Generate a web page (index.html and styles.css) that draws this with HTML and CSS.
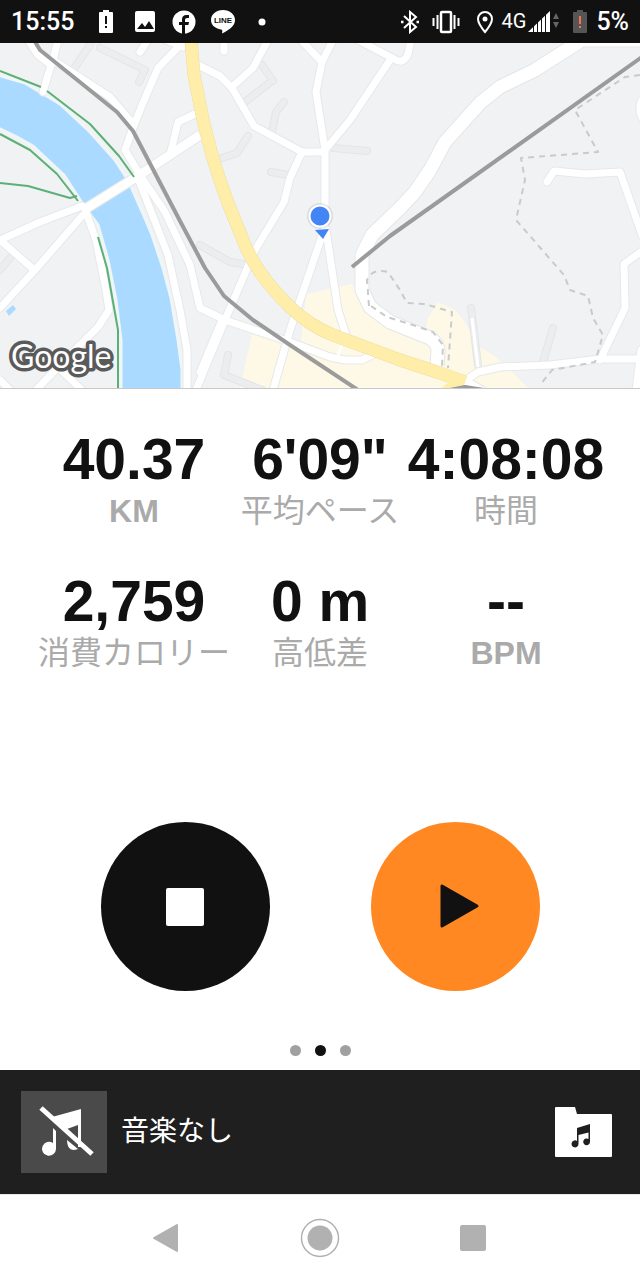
FILE: index.html
```html
<!DOCTYPE html>
<html lang="ja">
<head>
<meta charset="utf-8">
<meta name="viewport" content="width=device-width, initial-scale=1">
<title>ランニング</title>
<link rel="stylesheet" href="styles.css">
</head>
<body>
<header class="status">
  <div class="status-left">
    <time class="clock">15:55</time>
    <svg class="ic" viewBox="0 0 24 24" fill="#fff"><path d="M9 0h6v2h3q1 0 1 1v19q0 1-1 1H6q-1 0-1-1V3q0-1 1-1h3z"/><path d="M11 6h2v8h-2zM11 16h2v2h-2z" fill="#111"/></svg>
    <svg class="ic" viewBox="0 0 24 24" fill="#fff"><rect x="2" y="1" width="20" height="21" rx="2"/><path d="M4 19l5-6 3 4 4-6 5 8z" fill="#111"/></svg>
    <svg class="ic" viewBox="0 0 24 24"><circle cx="12" cy="12" r="11.500" fill="#fff"/><path d="M10 24v-9H7v-3h3V9.500q0-4.500 4.500-4.500h2.500v3h-2q-2 0-2 2v2h4l-.6 3H13v9z" fill="#111"/></svg>
    <svg class="ic" viewBox="0 0 24 24"><path d="M12 0C5 0 0 4.500 0 10c0 5 4 8.500 10 9.500 1.500.3 1.500 1 1 4C18 20 24 16 24 10 24 4.500 19 0 12 0z" fill="#fff"/><text class="line-mark" x="12" y="13" text-anchor="middle">LINE</text></svg>
    <svg class="ic" viewBox="0 0 24 24"><circle cx="12" cy="12" r="3.500" fill="#fff"/></svg>
  </div>
  <div class="status-right">
    <svg class="ic" viewBox="0 0 24 24" fill="none" stroke="#fff" stroke-width="2"><path d="M6 6l12 11-6 5V2l6 5L6 18"/><path d="M3 12h2.500M18.500 12H21" stroke-width="2.500"/></svg>
    <svg class="ic-wide" viewBox="0 0 32 24" fill="none" stroke="#fff" stroke-width="2.500"><rect x="11" y="2" width="10" height="20" rx="1"/><path d="M7.500 5v14M24.500 5v14M3.500 8v8M28.500 8v8" stroke-width="2"/></svg>
    <div class="network">
      <svg class="ic-pin" viewBox="0 0 30 24" fill="none" stroke="#fff" stroke-width="2"><path d="M15 22C10 16 8 12 8 9a7 7 0 0 1 14 0c0 3-2 7-7 13z"/><circle cx="15" cy="9" r="2.500" fill="#fff" stroke="none"/></svg>
      <span class="gen">4G</span>
      <svg class="ic-wide" viewBox="0 0 32 24"><path d="M0 22L22 1v21z" fill="#fff"/><path d="M5.500 14v9M9.500 9v14M13.500 6v17M17.500 2v21" stroke="#111"/><path d="M25 9l3-6 3 6zM25 12l3 6 3-6z" fill="#666"/></svg>
    </div>
    <div class="power">
      <svg class="ic" viewBox="0 0 24 24"><path d="M9 0h6v2h3q1 0 1 1v19q0 1-1 1H6q-1 0-1-1V3q0-1 1-1h3z" fill="#555"/><path d="M11 6h2v8h-2zM11 16h2v2h-2z" fill="#f4744e"/></svg>
      <span class="clock">5%</span>
    </div>
  </div>
</header>

<svg class="map" viewBox="0 43 640 345" preserveAspectRatio="xMidYMid slice" role="img" aria-label="地図">
  <defs>
    <g id="lanes">
      <path d="M100 48L145 70 139 82M90 45L75 67M245 102L268 84M262 65L273 81M284 102L276 112 272 132M248 136L237 153 222 158M271 172L288 175M333 148L367 151M200 245L230 262 243 264M228 355L224 375 262 390M471 308L478 365M553 328L543 362M0 270L10 258"/>
    </g>
    <g id="streets">
      <path d="M0 240L40 222 82 206M0 308L35 270 82 216M0 240L32 268M86 212L96 240 106 290 109 310 98 327 70 355 36 390M0 380L10 390M62 371L82 390"/>
      <path d="M28 40L38 55 51 65 43 92M58 40L53 60 110 97 134 125 125 150 142 178 165 212 190 265 200 308 225 320 290 342 330 357 345 360 362 360 374 354"/>
      <path d="M138 178L152 214 168 255 180 310 187 350 187 390M183 42L158 68 145 98 134 125M166 40L183 47M148 40L140 52M195 114L178 122 171 151M224 40V51"/>
      <path d="M198 65L220 76 232 88 254 126 302 152H325M268 40L253 68 233 86M301 40L322 62 333 40M322 62L316 92 325 150V225M358 40L396 60Q404 64 408 54L411 40M390 60L350 120 325 150"/>
      <path d="M302 152L290 178 284 202 255 250 225 320 196 390M324 230L290 330 273 390M326 230L338 310 347 338M222 320L200 372"/>
      <path d="M547 182L554 171 585 174 620 172 642 235M642 251L624 264 625 308 600 360M460 384L478 372 500 367 550 365 600 359H642M641 350L636 390M466 381L482 390M646 94Q634 108 646 124"/>
    </g>
    <path id="bridge" d="M82 211L138 176 200 135"/>
    <path id="avenue" d="M642 40H582L535 70 500 87 480 103 445 142 430 170 415 192 400 208 372 235 362 255V290L370 307 390 322 430 338Q438 344 438 350L437 366"/>
    <path id="highway" d="M191 40L194 75 203 120 212 155Q219 179 228 203L245 245Q258 276 290 307 310 326 333 335L400 360 440 373 465 382"/>
  </defs>
  <rect x="0" y="42" width="640" height="348" fill="#f0f2f4"/>
  <path class="town" d="M306 294L352 284 372 312 425 336 427 320 438 302 455 310Q467 322 478 347 495 352 528 388H240L252 334 300 348z"/>
  <path class="river" d="M-6 74L25 83 60 104 90 132 115 160 128 180 144 216 152 235 163 268 171 298 178 340 182 370V392H121V340L116 300 108 260 98 225 84 206 64 175 50 162 33 146 15 136-6 126z"/>
  <path fill="#aadaff" d="M6 311L13 305 16 309 9 316z"/>
  <use href="#lanes" class="lane-edge"/><use href="#lanes" class="lane"/>
  <use href="#streets" class="street-edge"/><use href="#bridge" class="bridge-edge"/><use href="#avenue" class="avenue-edge"/>
  <use href="#streets" class="street"/><use href="#bridge" class="bridge"/><use href="#avenue" class="avenue"/>
  <path class="lane-white" d="M344 340L338 355M472 318L478 367"/>
  <path class="park" d="M0 71L41 87M47 91L90 124 119 156 134 177M0 134L30 150 57 174 78 201M0 183L28 186 70 198 77 196M98 237L107 268 118 330V388"/>
  <path class="trail" d="M369 306L367 280Q372 268 388 272L400 290 407 303 425 304 452 312 448 368M371 306L387 317 413 325 433 332 443 345 442 366M640 75L625 77 575 110 598 152 521 158 525 180 516 220 564 275 570 290 588 296 593 318 603 335 595 362 552 370 540 385"/>
  <use href="#highway" class="highway-edge"/><use href="#highway" class="highway"/>
  <path class="highway" d="M460 381L446 392"/>
  <path class="rail" d="M34 40L40 50 117 112 133 131 180 221 205 268 224 296 253 320 290 345 358 390M352 267L390 236 642 57M450 390L465 387 484 390"/>
  <circle cx="320" cy="216" r="13" fill="#99a" opacity=".25"/>
  <path d="M315 230l14-1-6 10z" fill="#4285f4"/>
  <circle cx="320" cy="216" r="10.500" fill="#4285f4" stroke="#fff" stroke-width="2"/>
  <text class="credit" x="11" y="368">Google</text>
</svg>

<main class="run">
  <section class="stats">
    <div class="stat"><span class="value">40.37</span><span class="label">KM</span></div>
    <div class="stat"><span class="value">6'09"</span><span class="label">平均ペース</span></div>
    <div class="stat"><span class="value">4:08:08</span><span class="label">時間</span></div>
    <div class="stat"><span class="value">2,759</span><span class="label">消費カロリー</span></div>
    <div class="stat"><span class="value">0 m</span><span class="label">高低差</span></div>
    <div class="stat"><span class="value">--</span><span class="label">BPM</span></div>
  </section>
  <div class="controls">
    <button class="round stop" aria-label="停止"><svg viewBox="0 0 60 60"><rect x="11" y="11" width="38" height="38" rx="2" fill="#fff"/></svg></button>
    <button class="round play" aria-label="再開"><svg viewBox="0 0 60 60"><path d="M17 9v40l35-20z" fill="#111" stroke="#111" stroke-width="3" stroke-linejoin="round"/></svg></button>
  </div>
  <div class="pager"><span class="dot"></span><span class="dot current"></span><span class="dot"></span></div>
</main>

<section class="music">
  <div class="art"><svg viewBox="0 0 86 82"><path d="M31 26L60 18V56H57V34L46 38z" fill="#fff"/><path d="M32 37L35 40V58A7 7 0 1 1 32 52z" fill="#fff"/><path d="M46 49L57 58Q46 62 46 49z" fill="#fff"/><path d="M20 17L71 63" stroke="#fff" stroke-width="5"/></svg></div>
  <span class="track">音楽なし</span>
  <button class="library" aria-label="音楽ライブラリ"><svg viewBox="0 0 57 50"><path d="M0 1q0-1 1-1h19l2 7h34q1 0 1 1v41q0 1-1 1H1q-1 0-1-1z" fill="#fff"/><path d="M22 21l13-4v18a3.400 3.400 0 1 1-1.500-3v-6.500L23.500 28v9a3.500 3.500 0 1 1-1.500-3z" fill="#1f1f1f"/></svg></button>
</section>

<nav class="system">
  <button aria-label="戻る"><svg viewBox="0 0 40 40"><path d="M7 20L30 7v26z" fill="#b1b1b1" stroke="#b1b1b1" stroke-width="2" stroke-linejoin="round"/></svg></button>
  <button aria-label="ホーム"><svg viewBox="0 0 40 40"><circle cx="20" cy="20" r="18.500" fill="none" stroke="#b1b1b1" stroke-width="1.500"/><circle cx="20" cy="20" r="12.500" fill="#b1b1b1"/></svg></button>
  <button aria-label="履歴"><svg viewBox="0 0 40 40"><rect x="7" y="7" width="26" height="26" rx="2" fill="#b1b1b1"/></svg></button>
</nav>
</body>
</html>
```
FILE: styles.css
```css
* { box-sizing: border-box; }
body {
  margin: 0;
  min-height: 100vh;
  display: flex;
  flex-direction: column;
  background: #fff;
  color: #111;
  font-family: "Liberation Sans", "Noto Sans CJK JP", sans-serif;
}
svg { display: block; flex: none; }
button { border: 0; padding: 0; background: none; cursor: pointer; }

.status {
  height: 43px;
  padding: 0 11px;
  display: flex;
  align-items: center;
  justify-content: space-between;
  background: #111;
  color: #fff;
  font-family: Roboto, sans-serif;
}
.status-left, .status-right, .network, .power { display: flex; align-items: center; }
.status-left { gap: 15px; }
.status-right { gap: 8px; }
.network { gap: 2px; }
.power { gap: 4px; }
.clock { font-size: 25px; line-height: 43px; font-weight: 500; }
.status-left .clock { margin-right: 5px; }
.gen { font-size: 20px; line-height: 43px; }
.ic { width: 24px; height: 24px; }
.ic-wide { width: 32px; height: 24px; }
.ic-pin { width: 30px; height: 24px; }
.line-mark { font: bold 8px "Liberation Sans", sans-serif; fill: #111; }

.map { width: 100%; height: 346px; border-bottom: 1px solid #c8c8c8; }
.map use, .map path { stroke-linejoin: round; }
.town { fill: #fef8e6; }
.river { fill: #aadaff; stroke: #f0f5f5; stroke-width: 3; }
.lane-edge, .lane, .street-edge, .street, .bridge-edge, .bridge, .avenue-edge, .avenue,
.lane-white, .park, .trail, .highway-edge, .highway, .rail { fill: none; }
.lane-edge { stroke: #e4e5e7; stroke-width: 8; stroke-linecap: round; }
.lane { stroke: #ecedef; stroke-width: 6; stroke-linecap: round; }
.lane-white { stroke: #fff; stroke-width: 3; }
.street-edge { stroke: #e6e8ea; stroke-width: 9; stroke-linecap: round; }
.street { stroke: #fff; stroke-width: 7; stroke-linecap: round; }
.bridge-edge { stroke: #e6e8ea; stroke-width: 11; }
.bridge { stroke: #fff; stroke-width: 9; }
.avenue-edge { stroke: #e4e6e8; stroke-width: 15; }
.avenue { stroke: #fff; stroke-width: 13; }
.park { stroke: #5bb075; stroke-width: 2; }
.trail { stroke: #c9cacc; stroke-width: 2; stroke-dasharray: 6 5; }
.highway-edge { stroke: #f0dc9c; stroke-width: 13; }
.highway { stroke: #ffeeaa; stroke-width: 12; }
.rail { stroke: #9b9b9b; stroke-width: 4; }
.credit {
  font: 400 32px Lato, sans-serif;
  fill: #fff;
  stroke: #5a5a5a;
  stroke-width: 7px;
  stroke-linejoin: round;
  paint-order: stroke;
}

.run { flex: 1; display: flex; flex-direction: column; padding: 40px 0 14px; }
.stats {
  display: grid;
  grid-template-columns: repeat(3, minmax(0, 1fr));
  row-gap: 38px;
  padding: 0 41px;
}
.stat { display: flex; flex-direction: column; align-items: center; white-space: nowrap; }
.value { font-size: 57px; line-height: 60px; font-weight: 700; }
.label { font-size: 32px; line-height: 44px; font-weight: 400; color: #aaa; }
.stat:first-child .label, .stat:last-child .label { font-weight: 700; }

.controls { margin-top: auto; display: flex; justify-content: center; gap: 101px; }
.round {
  width: 169px;
  height: 169px;
  border-radius: 50%;
  display: flex;
  align-items: center;
  justify-content: center;
}
.round svg { width: 60px; height: 60px; }
.stop { background: #111; }
.play { background: #ff8822; }
.pager { margin-top: 54px; display: flex; justify-content: center; gap: 14px; }
.dot { width: 11px; height: 11px; border-radius: 50%; background: #a0a0a0; }
.dot.current { background: #111; }

.music {
  height: 124px;
  padding: 0 28px 0 21px;
  display: flex;
  align-items: center;
  background: #1f1f1f;
  color: #fff;
}
.art { background: #4a4a4a; }
.art svg { width: 86px; height: 82px; }
.track { flex: 1; margin-left: 14px; font-size: 28px; line-height: 40px; }
.library svg { width: 57px; height: 50px; }

.system {
  height: 86px;
  display: flex;
  align-items: center;
  justify-content: center;
  gap: 113px;
  border-top: 1px solid #e8e8e8;
}
.system svg { width: 40px; height: 40px; }
```
